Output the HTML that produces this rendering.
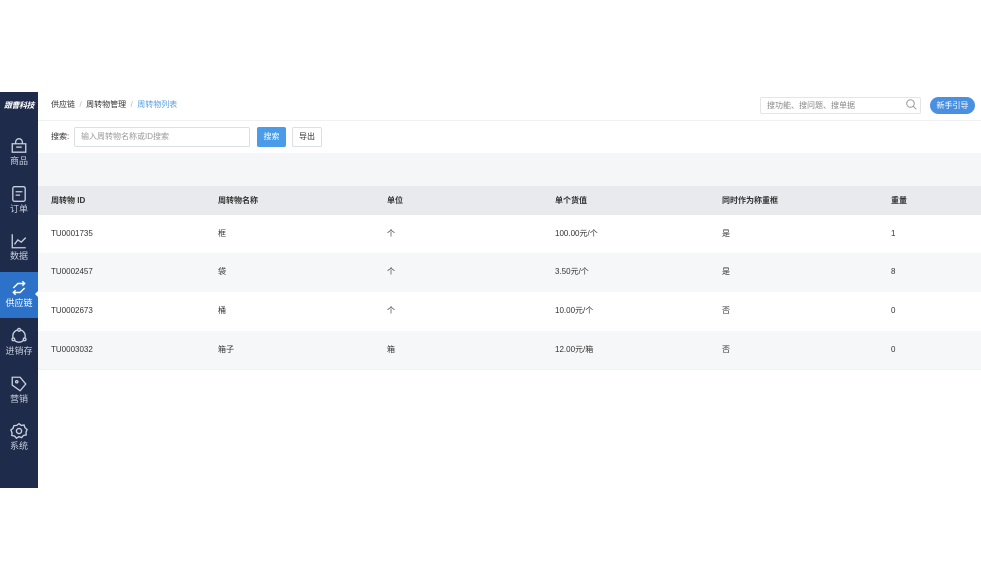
<!DOCTYPE html>
<html><head><meta charset="utf-8"><style>
*{margin:0;padding:0;box-sizing:border-box}
body{width:981px;height:582px;background:#fff;font-family:"Liberation Sans","Noto Sans CJK SC",sans-serif;position:relative;overflow:hidden;color:#333}
.sb{position:absolute;left:0;top:92px;width:38px;height:396px;background:#1e2b4a}
.logo{position:absolute;left:0;top:0;width:38px;height:28px;color:#fff;font-size:8px;font-style:italic;font-weight:bold;text-align:center;line-height:28px;letter-spacing:-0.5px}
.it{position:absolute;left:0;width:38px;height:46px;color:#c8cfdc;font-size:9px;line-height:11px;text-align:center}
.it svg{display:block;margin:0 auto}
.it span{display:block;margin-top:1px}
.act{background:#2d72c9;color:#fff}
.act:after{content:"";position:absolute;right:-1px;top:18px;border:4px solid transparent;border-right-color:#fff}
.t{position:absolute;font-size:8px;line-height:10px;white-space:nowrap}
.hdrline{position:absolute;left:38px;top:120px;width:943px;height:1px;background:#eef0f3}
.band{position:absolute;left:38px;top:153px;width:943px;height:33px;background:#f5f6f8}
.th{position:absolute;left:38px;top:186px;width:943px;height:29px;background:#e8eaee}
.row{position:absolute;left:38px;width:943px;height:39px}
.g{background:#f6f7f9}
</style></head><body>
<div class="sb">
 <div class="logo">跟曹科技</div>
 <div class="it" style="top:45px"><svg width="18" height="18" viewBox="0 0 16 16" fill="none" stroke="#c8cfdc" stroke-width="1.2"><path d="M2 6h12v7.5H2z"/><path d="M5 6V4.5a3 3 0 016 0V6"/><path d="M5.5 9h5"/></svg><span>商品</span></div>
 <div class="it" style="top:93px"><svg width="18" height="18" viewBox="0 0 16 16" fill="none" stroke="#c8cfdc" stroke-width="1.2"><rect x="2.5" y="1.5" width="11" height="13" rx="1.5"/><path d="M5 6h6M5 9h4"/></svg><span>订单</span></div>
 <div class="it" style="top:140px"><svg width="18" height="18" viewBox="0 0 16 16" fill="none" stroke="#c8cfdc" stroke-width="1.2"><path d="M2 2v12h12"/><path d="M4 11l3-4 3 2 4-4"/></svg><span>数据</span></div>
 <div class="it act" style="top:180px;padding-top:7px"><svg width="18" height="18" viewBox="0 0 16 16" fill="none" stroke="#fff" stroke-width="1.3"><path d="M3 8l4-4h6M11 2l2 2-2 2"/><path d="M13 8l-4 4H3M5 14l-2-2 2-2"/></svg><span>供应链</span></div>
 <div class="it" style="top:235px"><svg width="18" height="18" viewBox="0 0 16 16" fill="none" stroke="#c8cfdc" stroke-width="1.2"><circle cx="8" cy="8" r="5.5"/><circle cx="8" cy="2.5" r="1.2" fill="#1e2b4a"/><circle cx="3" cy="11" r="1.2" fill="#1e2b4a"/><circle cx="13" cy="11" r="1.2" fill="#1e2b4a"/></svg><span>进销存</span></div>
 <div class="it" style="top:283px"><svg width="18" height="18" viewBox="0 0 16 16" fill="none" stroke="#c8cfdc" stroke-width="1.2"><path d="M2 2h7l5 6-5 6-7-5z"/><circle cx="6" cy="6" r="1"/></svg><span>营销</span></div>
 <div class="it" style="top:330px"><svg width="18" height="18" viewBox="0 0 16 16" fill="none" stroke="#c8cfdc" stroke-width="1.2"><path d="M8 1.5l2 1.5 2.5-.3.8 2.4 1.9 1.6-1 2.3.2 2.5-2.5.5-1.6 1.9L8 13l-2.3 1.4-1.6-1.9-2.5-.5.2-2.5-1-2.3 1.9-1.6.8-2.4L6 3z"/><circle cx="8" cy="8" r="2.3"/></svg><span>系统</span></div>
</div>
<div class="t" style="left:51px;top:100px;color:#333">供应链 <span style="color:#bbb">&nbsp;/&nbsp;</span> 周转物管理 <span style="color:#bbb">&nbsp;/&nbsp;</span> <span style="color:#5a9ee0">周转物列表</span></div>
<div style="position:absolute;left:760px;top:97px;width:161px;height:17px;border:1px solid #e3e5e9;border-radius:2px"></div>
<div class="t" style="left:767px;top:101px;color:#888">搜功能、搜问题、搜单据</div>
<svg style="position:absolute;left:906px;top:99px" width="11" height="11" viewBox="0 0 11 11" fill="none" stroke="#999" stroke-width="1"><circle cx="4.5" cy="4.5" r="3.8"/><path d="M7.3 7.3l3 3"/></svg>
<div style="position:absolute;left:930px;top:97px;width:45px;height:17px;border-radius:9px;background:#4a90e2;color:#fff;font-size:8px;text-align:center;line-height:17px">新手引导</div>
<div class="hdrline"></div>
<div class="t" style="left:51px;top:132px;color:#333">搜索:</div>
<div style="position:absolute;left:74px;top:127px;width:176px;height:20px;border:1px solid #dcdfe6;border-radius:2px"></div>
<div class="t" style="left:81px;top:132px;color:#999">输入周转物名称或ID搜索</div>
<div style="position:absolute;left:257px;top:127px;width:29px;height:20px;background:#4a9be8;border-radius:2px;color:#fff;font-size:8px;text-align:center;line-height:20px">搜索</div>
<div style="position:absolute;left:292px;top:127px;width:30px;height:20px;border:1px solid #dcdfe6;border-radius:2px;font-size:8px;text-align:center;line-height:18px">导出</div>
<div class="band"></div>
<div class="th"></div>
<div class="row" style="top:215px"></div>
<div class="row g" style="top:253px"></div>
<div class="row" style="top:292px"></div>
<div class="row g" style="top:331px"></div>
<div style="position:absolute;left:38px;top:369px;width:943px;height:1px;background:#eef0f3"></div>
<div class="t" style="left:51px;top:196px;font-weight:bold">周转物 ID</div>
<div class="t" style="left:218px;top:196px;font-weight:bold">周转物名称</div>
<div class="t" style="left:387px;top:196px;font-weight:bold">单位</div>
<div class="t" style="left:555px;top:196px;font-weight:bold">单个货值</div>
<div class="t" style="left:722px;top:196px;font-weight:bold">同时作为称重框</div>
<div class="t" style="left:891px;top:196px;font-weight:bold">重量</div>

<div class="t" style="left:51px;top:229px">TU0001735</div><div class="t" style="left:218px;top:229px">框</div><div class="t" style="left:387px;top:229px">个</div><div class="t" style="left:555px;top:229px">100.00元/个</div><div class="t" style="left:722px;top:229px">是</div><div class="t" style="left:891px;top:229px">1</div>
<div class="t" style="left:51px;top:267px">TU0002457</div><div class="t" style="left:218px;top:267px">袋</div><div class="t" style="left:387px;top:267px">个</div><div class="t" style="left:555px;top:267px">3.50元/个</div><div class="t" style="left:722px;top:267px">是</div><div class="t" style="left:891px;top:267px">8</div>
<div class="t" style="left:51px;top:306px">TU0002673</div><div class="t" style="left:218px;top:306px">桶</div><div class="t" style="left:387px;top:306px">个</div><div class="t" style="left:555px;top:306px">10.00元/个</div><div class="t" style="left:722px;top:306px">否</div><div class="t" style="left:891px;top:306px">0</div>
<div class="t" style="left:51px;top:345px">TU0003032</div><div class="t" style="left:218px;top:345px">箱子</div><div class="t" style="left:387px;top:345px">箱</div><div class="t" style="left:555px;top:345px">12.00元/箱</div><div class="t" style="left:722px;top:345px">否</div><div class="t" style="left:891px;top:345px">0</div>
</body></html>
